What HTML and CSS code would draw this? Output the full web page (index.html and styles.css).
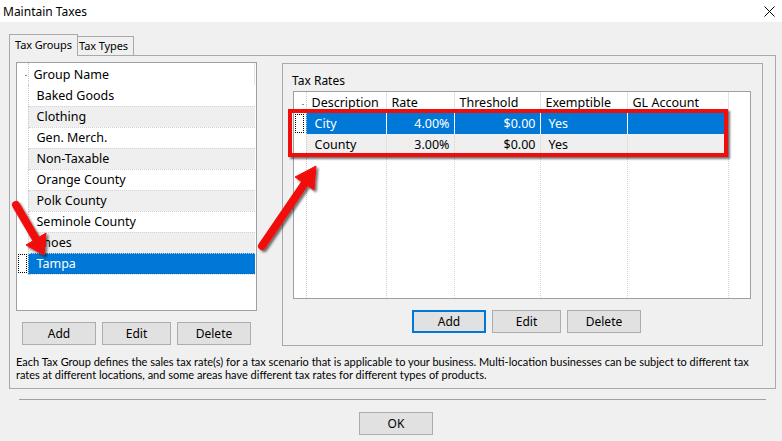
FILE: index.html
```html
<!DOCTYPE html>
<html lang="en">
<head>
    <meta charset="UTF-8">
    <meta name="viewport" content="width=device-width, initial-scale=1.0">
    <title>Maintain Taxes</title>
    <link rel="stylesheet" href="styles.css">
</head>
<body>

<div class="window">
    <div class="titlebar">
        <span>Maintain Taxes</span>
        <svg class="close" width="11" height="11" viewBox="0 0 11 11">
            <path d="M0.5 0.5 L10.5 10.5 M10.5 0.5 L0.5 10.5" stroke="#000" stroke-width="1" fill="none"/>
        </svg>
    </div>

    <div class="content">
        <div class="tabs">
            <div class="tab active">Tax Groups</div>
            <div class="tab">Tax Types</div>
        </div>

        <div class="tabpanel">
            <div class="columns">
                <div class="leftcol">
                    <div class="list">
                        <table class="listtable">
                            <tr class="head">
                                <td class="rowhdr"><span class="tick"></span></td>
                                <td class="hcell">Group Name</td>
                            </tr>
                            <tr><td class="rowhdr"></td><td class="cell">Baked Goods</td></tr>
                            <tr class="alt"><td class="rowhdr"></td><td class="cell">Clothing</td></tr>
                            <tr><td class="rowhdr"></td><td class="cell">Gen. Merch.</td></tr>
                            <tr class="alt"><td class="rowhdr"></td><td class="cell">Non-Taxable</td></tr>
                            <tr><td class="rowhdr"></td><td class="cell">Orange County</td></tr>
                            <tr class="alt"><td class="rowhdr"></td><td class="cell">Polk County</td></tr>
                            <tr><td class="rowhdr"></td><td class="cell">Seminole County</td></tr>
                            <tr class="alt"><td class="rowhdr"></td><td class="cell">Shoes</td></tr>
                            <tr class="sel"><td class="rowhdr"><span class="focus"></span></td><td class="cell">Tampa</td></tr>
                        </table>
                    </div>
                    <div class="btnrow left-btns">
                        <button class="btn wide">Add</button>
                        <button class="btn">Edit</button>
                        <button class="btn wide">Delete</button>
                    </div>
                </div>

                <div class="groupbox">
                    <div class="gb-label">Tax Rates</div>
                    <div class="grid">
                        <table class="gridtable">
                            <colgroup>
                                <col class="c-hdr">
                                <col class="c-desc">
                                <col class="c-rate">
                                <col class="c-thr">
                                <col class="c-exm">
                                <col class="c-gl">
                                <col>
                            </colgroup>
                            <tr class="head">
                                <td class="rowhdr"><span class="tick"></span></td>
                                <td class="hcell">Description</td>
                                <td class="hcell">Rate</td>
                                <td class="hcell">Threshold</td>
                                <td class="hcell">Exemptible</td>
                                <td class="hcell">GL Account</td>
                                <td class="hfill"></td>
                            </tr>
                            <tr class="sel">
                                <td class="rowhdr"><span class="focus"></span></td>
                                <td class="cell">City</td>
                                <td class="cell num">4.00%</td>
                                <td class="cell num">$0.00</td>
                                <td class="cell">Yes</td>
                                <td class="cell"></td>
                                <td class="fill"></td>
                            </tr>
                            <tr class="alt">
                                <td class="rowhdr"></td>
                                <td class="cell">County</td>
                                <td class="cell num">3.00%</td>
                                <td class="cell num">$0.00</td>
                                <td class="cell">Yes</td>
                                <td class="cell"></td>
                                <td class="fill"></td>
                            </tr>
                            <tr class="empty">
                                <td class="rowhdr"></td>
                                <td class="cell"></td>
                                <td class="cell"></td>
                                <td class="cell"></td>
                                <td class="cell"></td>
                                <td class="cell"></td>
                                <td class="fill"></td>
                            </tr>
                        </table>
                    </div>
                    <div class="btnrow right-btns">
                        <button class="btn wide focused">Add</button>
                        <button class="btn">Edit</button>
                        <button class="btn wide">Delete</button>
                    </div>
                </div>
            </div>

            <p class="desc">Each Tax Group defines the sales tax rate(s) for a tax scenario that is applicable to your business. Multi-location businesses can be subject to different tax rates at different locations, and some areas have different tax rates for different types of products.</p>
        </div>

        <div class="separator"></div>

        <div class="footer">
            <button class="btn wide">OK</button>
        </div>
    </div>

    <!-- callouts drawn over the dialog -->
    <div class="redbox"></div>
    <svg class="arrows" width="782" height="441" viewBox="0 0 782 441">
        <defs>
            <filter id="shadow" x="-20%" y="-20%" width="140%" height="140%">
                <feDropShadow dx="2" dy="2" stdDeviation="1.2" flood-color="#000" flood-opacity="0.55"/>
            </filter>
        </defs>
        <g filter="url(#shadow)" fill="#f20d0d" stroke="#f20d0d">
            <line x1="16" y1="205" x2="36" y2="239" stroke-width="8" stroke-linecap="round"/>
            <polygon points="44,255 26,245 46,233" stroke-width="1" stroke-linejoin="round"/>
            <line x1="262" y1="246" x2="305" y2="183" stroke-width="8" stroke-linecap="round"/>
            <polygon points="316,166 295,177 314,190" stroke-width="1" stroke-linejoin="round"/>
        </g>
    </svg>
</div>

</body>
</html>
```

FILE: styles.css
```css
body {
    margin: 0;
    background: #f0f0f0;
    font-family: "Noto Sans", "Open Sans", sans-serif;
    font-size: 12px;
    color: #000;
}

.window {
    position: relative;
    width: 782px;
    height: 441px;
    overflow: hidden;
}

.titlebar {
    height: 22px;
    background: #fff;
    display: flex;
    align-items: center;
    justify-content: space-between;
    padding: 0 7px 0 3px;
    box-sizing: border-box;
}

.close {
    margin-top: 1px;
}

.content {
    padding: 12px 6px 0 9px;
}

/* tabs */
.tabs {
    display: flex;
    align-items: flex-end;
    height: 22px;
    margin-bottom: -1px;
    position: relative;
    z-index: 1;
}

.tab {
    box-sizing: border-box;
    border: 1px solid #a9a9a9;
    border-bottom: none;
    background: #f0f0f0;
    line-height: 18px;
    padding-left: 5px;
    white-space: nowrap;
    font-size: 11px;
    letter-spacing: -0.1px;
}

.tab.active {
    width: 69px;
    height: 22px;
    line-height: 20px;
}

.tab:not(.active) {
    width: 56px;
    height: 19px;
    margin-bottom: 1px;
    border-left: none;
    padding-left: 1px;
}

.tabpanel {
    box-sizing: border-box;
    width: 767px;
    height: 334px;
    border: 1px solid #a9a9a9;
    padding: 6px 0 0 6px;
}

.columns {
    display: flex;
    gap: 25px;
}

/* left list */
.leftcol {
    width: 241px;
}

.list {
    box-sizing: border-box;
    width: 241px;
    height: 249px;
    border: 1px solid #a0a0a0;
    background: #fff;
}

table {
    border-collapse: collapse;
    table-layout: fixed;
}

.listtable {
    width: 238px;
}

.listtable td {
    height: 21px;
    padding: 0;
    box-sizing: border-box;
    white-space: nowrap;
    font-size: 12.5px;
}

.listtable .head td {
    height: 22px;
}

.rowhdr {
    width: 11px;
    background: #fff;
    border-right: 1px dotted #c8c8c8;
    position: relative;
}

.tick {
    position: absolute;
    left: 8px;
    top: 12px;
    width: 2px;
    height: 1px;
    background: #888;
}

.hcell {
    padding-left: 5px !important;
    border-right: 1px solid #e3e3e3;
    background: #fff;
}

.cell {
    padding-left: 8px !important;
    border-bottom: 1px dotted #d4d4d4;
}

.alt .cell {
    background: #efefef;
}

.sel .cell {
    background: #0078d7;
    color: #fff;
}

.focus {
    display: block;
    box-sizing: border-box;
    width: 9px;
    height: 19px;
    margin-left: 1px;
    border: 1px dotted #000;
}

/* buttons */
.btnrow {
    display: flex;
    gap: 6px;
}

.btn {
    box-sizing: border-box;
    width: 69px;
    height: 23px;
    background: #e1e1e1;
    border: 1px solid #adadad;
    font-family: inherit;
    font-size: 12px;
    color: #000;
    padding: 0;
}

.btn.wide {
    width: 74px;
}

.btn.focused {
    border: 2px solid #0078d7;
}

.left-btns {
    margin: 11px 0 0 6px;
}

/* tax rates group */
.groupbox {
    box-sizing: border-box;
    width: 481px;
    height: 283px;
    margin-top: 1px;
    border: 1px solid #a9a9a9;
    padding: 9px 0 0 10px;
}

.gb-label {
    line-height: 16px;
    margin-left: -1px;
}

.grid {
    box-sizing: border-box;
    width: 458px;
    height: 208px;
    margin-top: 2px;
    border: 1px solid #a0a0a0;
    background: #fff;
}

.gridtable {
    width: 456px;
    height: 206px;
}

.gridtable td {
    padding: 0;
    box-sizing: border-box;
    white-space: nowrap;
    font-size: 12.5px;
}

.gridtable tr.head td,
.gridtable tr.sel td,
.gridtable tr.alt td {
    height: 21px;
}

.gridtable .rowhdr {
    width: auto;
}

.c-hdr { width: 12px; }
.c-desc { width: 80px; }
.c-rate { width: 68px; }
.c-thr { width: 86px; }
.c-exm { width: 87px; }
.c-gl { width: 101px; }

.gridtable .cell {
    border-right: 1px dotted #d4d4d4;
    border-bottom: none;
}

.gridtable .sel .cell {
    border-right: 1px solid #fff;
}

.gridtable .num {
    text-align: right;
    padding-left: 0 !important;
    padding-right: 4px;
}

.hfill,
.fill {
    background: #fff;
}

.right-btns {
    margin: 11px 0 0 119px;
}

.desc {
    margin: 9px 0 0 0;
    width: 752px;
    font-family: Lato, "Noto Sans", sans-serif;
    font-size: 11px;
    line-height: 13px;
}

.separator {
    margin: 10px 0 0 10px;
    width: 747px;
    border-top: 1px solid #a0a0a0;
}

.footer {
    padding: 12px 0 0 350px;
}

/* callouts */
.redbox {
    position: absolute;
    left: 288px;
    top: 109px;
    width: 440px;
    height: 48px;
    box-sizing: border-box;
    border: 4px solid #f20d0d;
    box-shadow: 2px 2px 2px rgba(0, 0, 0, 0.55);
}

.arrows {
    position: absolute;
    left: 0;
    top: 0;
    pointer-events: none;
}
```
